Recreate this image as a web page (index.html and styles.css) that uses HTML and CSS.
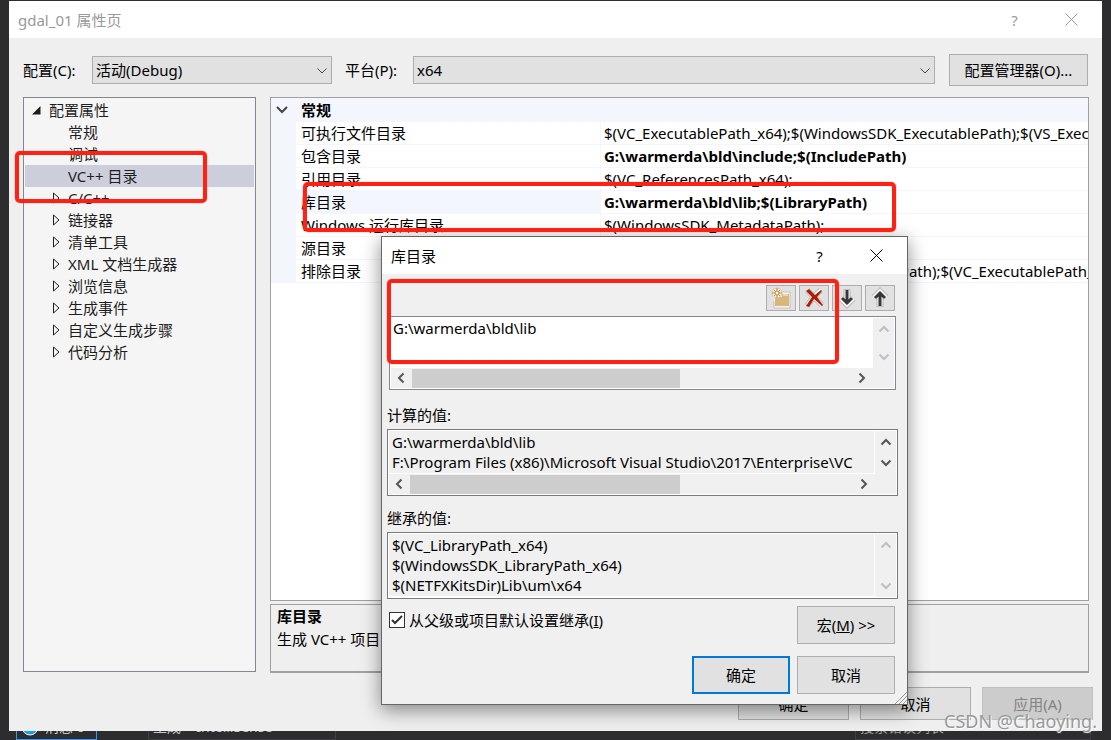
FILE: index.html
```html
<!DOCTYPE html>
<html lang="zh-CN">

  <head>
    <meta charset="UTF-8">
    <meta name="viewport" content="width=device-width, initial-scale=1.0">
    <title>gdal_01 属性页</title>
    <link rel="stylesheet" href="styles.css">
  </head>

  <body>
    <main class="window">
      <header class="title-bar inactive">
        <h1>gdal_01 属性页</h1>
        <button class="title-btn" aria-label="帮助">?</button>
        <button class="title-btn" aria-label="关闭">
          <svg width="13" height="13" viewBox="0 0 13 13"><path d="M0.5 0.5l12 12M12.5 0.5l-12 12"/></svg>
        </button>
      </header>

      <div class="config-bar">
        <label class="config-label" for="config">配置(C):</label>
        <div class="select-box config-select">
          <select id="config"><option>活动(Debug)</option></select>
          <svg width="10" height="6" viewBox="0 0 10 6"><path d="M0.5 0.5l4.5 4.5l4.5-4.5"/></svg>
        </div>
        <label class="platform-label" for="platform">平台(P):</label>
        <div class="select-box platform-select">
          <select id="platform"><option>x64</option></select>
          <svg width="10" height="6" viewBox="0 0 10 6"><path d="M0.5 0.5l4.5 4.5l4.5-4.5"/></svg>
        </div>
        <button class="btn manager-btn">配置管理器(O)...</button>
      </div>

      <div class="panels">
        <nav class="tree">
          <div class="tree-root">
            <svg width="9" height="9" viewBox="0 0 9 9"><path d="M8.5 0v8.5H0z"/></svg>配置属性
          </div>
          <ul>
            <li>常规</li>
            <li>调试</li>
            <li class="selected">VC++ 目录</li>
            <li class="closed"><svg width="8" height="12" viewBox="0 0 8 12"><path d="M1.5 1v10l5.5-5z"/></svg>C/C++</li>
            <li class="closed"><svg width="8" height="12" viewBox="0 0 8 12"><path d="M1.5 1v10l5.5-5z"/></svg>链接器</li>
            <li class="closed"><svg width="8" height="12" viewBox="0 0 8 12"><path d="M1.5 1v10l5.5-5z"/></svg>清单工具</li>
            <li class="closed"><svg width="8" height="12" viewBox="0 0 8 12"><path d="M1.5 1v10l5.5-5z"/></svg>XML 文档生成器</li>
            <li class="closed"><svg width="8" height="12" viewBox="0 0 8 12"><path d="M1.5 1v10l5.5-5z"/></svg>浏览信息</li>
            <li class="closed"><svg width="8" height="12" viewBox="0 0 8 12"><path d="M1.5 1v10l5.5-5z"/></svg>生成事件</li>
            <li class="closed"><svg width="8" height="12" viewBox="0 0 8 12"><path d="M1.5 1v10l5.5-5z"/></svg>自定义生成步骤</li>
            <li class="closed"><svg width="8" height="12" viewBox="0 0 8 12"><path d="M1.5 1v10l5.5-5z"/></svg>代码分析</li>
          </ul>
        </nav>

        <div class="details">
          <div class="properties">
            <table>
              <colgroup><col class="col-gutter"><col class="col-name"><col></colgroup>
              <tbody>
                <tr class="group">
                  <td class="gutter"><svg width="12" height="8" viewBox="0 0 12 8"><path d="M1 1l5 5l5-5"/></svg></td>
                  <th colspan="2">常规</th>
                </tr>
                <tr><td class="gutter"></td><td>可执行文件目录</td><td>$(VC_ExecutablePath_x64);$(WindowsSDK_ExecutablePath);$(VS_ExecutablePath)</td></tr>
                <tr><td class="gutter"></td><td>包含目录</td><td class="changed">G:\warmerda\bld\include;$(IncludePath)</td></tr>
                <tr><td class="gutter"></td><td>引用目录</td><td>$(VC_ReferencesPath_x64);</td></tr>
                <tr><td class="gutter"></td><td class="active">库目录</td><td class="changed">G:\warmerda\bld\lib;$(LibraryPath)</td></tr>
                <tr><td class="gutter"></td><td>Windows 运行库目录</td><td>$(WindowsSDK_MetadataPath);</td></tr>
                <tr><td class="gutter"></td><td>源目录</td><td></td></tr>
                <tr><td class="gutter"></td><td>排除目录</td><td>$(VC_IncludePath);$(WindowsSDK_IncludePath);$(VC_ExecutablePath_x64)</td></tr>
              </tbody>
            </table>
          </div>
          <div class="description">
            <h2>库目录</h2>
            <p>生成 VC++ 项目</p>
          </div>
        </div>
      </div>

      <div class="window-buttons">
        <button class="btn">确定</button>
        <button class="btn">取消</button>
        <button class="btn" disabled>应用(A)</button>
      </div>
    </main>

    <footer class="status-strip">
      <span class="status-item messages">
        <svg width="18" height="18" viewBox="0 0 18 18"><circle cx="9" cy="9" r="8"/><path d="M9 7v6"/></svg>消息 0
      </span>
      <span class="status-item build">生成 + IntelliSense</span>
      <span class="status-item search">搜索错误列表</span>
    </footer>

    <section class="dialog" role="dialog" aria-labelledby="dialog-title">
      <header class="title-bar">
        <h2 id="dialog-title">库目录</h2>
        <button class="title-btn" aria-label="帮助">?</button>
        <button class="title-btn" aria-label="关闭">
          <svg width="13" height="13" viewBox="0 0 13 13"><path d="M0.5 0.5l12 12M12.5 0.5l-12 12"/></svg>
        </button>
      </header>

      <div class="dialog-body">
        <div class="tool-buttons">
          <button class="btn" aria-label="新行">
            <svg width="22" height="22" viewBox="0 0 22 22">
              <path d="M3 8h6l2-3h9v16H4v-7" fill="#f8f6f2" stroke="#c6c3bd"/>
              <path d="M5 10h7V7h7v12H5z" fill="#dcb679"/>
              <path d="M13 8h5" stroke="#fff8e8"/>
              <circle cx="7" cy="6" r="5" fill="#f6f4ef" stroke="#cbc6bd"/>
              <path d="M7 1v10M2 6h10M4 3l6 6M10 3l-6 6" stroke="#c98520"/>
              <circle cx="7" cy="6" r="2" fill="#fff" stroke="#c98520"/>
            </svg>
          </button>
          <button class="btn" aria-label="删除">
            <svg width="22" height="22" viewBox="0 0 22 22">
              <path d="M4 3c4 4 9 9 15 15M18 3c-5 4-9 9-14 16" fill="none" stroke="#bbb" stroke-width="6"/>
              <path d="M4 3c4 4 9 9 15 15M18 3c-5 4-9 9-14 16" fill="none" stroke="#f6f6f6" stroke-width="4"/>
              <path d="M3 4l3-2l6 6l6-5l1 1l-5 6l6 8l-1 1l-8-7l-5 8l-3-1l6-9z" fill="#a91c05"/>
            </svg>
          </button>
          <button class="btn" aria-label="下移">
            <svg width="22" height="22" viewBox="0 0 22 22">
              <path d="M11 2v16M5 11l6 6l6-6" fill="none" stroke="#bbb" stroke-width="7"/>
              <path d="M11 3v15M5 11l6 6l6-6" fill="none" stroke="#f6f6f6" stroke-width="5"/>
              <path d="M11 3v14M6 11l5 5l5-5" fill="none" stroke="#38383c" stroke-width="3"/>
            </svg>
          </button>
          <button class="btn" aria-label="上移">
            <svg width="22" height="22" viewBox="0 0 22 22">
              <path d="M11 4v16M5 11l6-6l6 6" fill="none" stroke="#bbb" stroke-width="7"/>
              <path d="M11 4v15M5 11l6-6l6 6" fill="none" stroke="#f6f6f6" stroke-width="5"/>
              <path d="M11 5v14M6 11l5-5l5 5" fill="none" stroke="#38383c" stroke-width="3"/>
            </svg>
          </button>
        </div>

        <div class="list-box editable">
          <textarea aria-label="目录" wrap="off" rows="2">G:\warmerda\bld\lib</textarea>
          <div class="scroll-v off">
            <svg width="12" height="8" viewBox="0 0 12 8"><path d="M1.5 6.5l4.5-4.5l4.5 4.5"/></svg>
            <svg width="12" height="8" viewBox="0 0 12 8"><path d="M1.5 1.5l4.5 4.5l4.5-4.5"/></svg>
          </div>
          <div class="scroll-h">
            <svg width="8" height="12" viewBox="0 0 8 12"><path d="M6.5 1.5l-4.5 4.5l4.5 4.5"/></svg>
            <div class="scroll-track"><div class="scroll-thumb"></div></div>
            <svg width="8" height="12" viewBox="0 0 8 12"><path d="M1.5 1.5l4.5 4.5l-4.5 4.5"/></svg>
          </div>
        </div>

        <label class="list-label evaluated-label" for="evaluated">计算的值:</label>
        <div class="list-box">
          <textarea id="evaluated" wrap="off" rows="2" readonly>G:\warmerda\bld\lib
F:\Program Files (x86)\Microsoft Visual Studio\2017\Enterprise\VC</textarea>
          <div class="scroll-v">
            <svg width="12" height="8" viewBox="0 0 12 8"><path d="M1.5 6.5l4.5-4.5l4.5 4.5"/></svg>
            <svg width="12" height="8" viewBox="0 0 12 8"><path d="M1.5 1.5l4.5 4.5l4.5-4.5"/></svg>
          </div>
          <div class="scroll-h">
            <svg width="8" height="12" viewBox="0 0 8 12"><path d="M6.5 1.5l-4.5 4.5l4.5 4.5"/></svg>
            <div class="scroll-track"><div class="scroll-thumb"></div></div>
            <svg width="8" height="12" viewBox="0 0 8 12"><path d="M1.5 1.5l4.5 4.5l-4.5 4.5"/></svg>
          </div>
        </div>

        <label class="list-label" for="inherited">继承的值:</label>
        <div class="list-box">
          <textarea id="inherited" wrap="off" rows="3" readonly>$(VC_LibraryPath_x64)
$(WindowsSDK_LibraryPath_x64)
$(NETFXKitsDir)Lib\um\x64</textarea>
          <div class="scroll-v off">
            <svg width="12" height="8" viewBox="0 0 12 8"><path d="M1.5 6.5l4.5-4.5l4.5 4.5"/></svg>
            <svg width="12" height="8" viewBox="0 0 12 8"><path d="M1.5 1.5l4.5 4.5l4.5-4.5"/></svg>
          </div>
        </div>

        <div class="dialog-footer">
          <label class="inherit">
            <input type="checkbox" checked>
            <svg width="12" height="10" viewBox="0 0 12 10"><path d="M1 5l3 3l7-7"/></svg>
            <span>从父级或项目默认设置继承(<u>I</u>)</span>
          </label>
          <button class="btn">宏(<u>M</u>) &gt;&gt;</button>
          <button class="btn default">确定</button>
          <button class="btn">取消</button>
        </div>
      </div>
      <svg class="grip" width="12" height="12" viewBox="0 0 12 12"><path d="M0 12l12-12M4 12l8-8M8 12l4-4"/></svg>
    </section>

    <!-- highlight frames -->
    <div class="mark mark-tree"></div>
    <div class="mark mark-row"></div>
    <div class="mark mark-list"></div>

    <div class="watermark">CSDN @Chaoying.</div>
  </body>

</html>
```
FILE: styles.css
```css
* {
  box-sizing: border-box;
}

body {
  position: relative;
  margin: 0;
  min-height: 100vh;
  overflow-x: hidden;
  background-color: #2d2d30;
  color: #000;
  font-family: 'Noto Sans', 'Noto Sans CJK SC', sans-serif;
  font-size: 15px;
  line-height: 20px;
}

h1, h2, p, ul {
  margin: 0;
  padding: 0;
  font-size: 15px;
}

svg {
  display: block;
  flex: none;
  fill: none;
}

button, select, textarea {
  margin: 0;
  font: inherit;
  color: inherit;
}

.window {
  margin: 1px 9px 0;
  background-color: #efefef;
}

/* Title bars */
.title-bar {
  display: flex;
  align-items: center;
  height: 37px;
  padding-left: 9px;
  background-color: #fff;
}

.title-bar h1, .title-bar h2 {
  flex: 1;
  font-weight: normal;
}

.title-bar.inactive {
  color: #999;
}

.title-btn {
  display: flex;
  justify-content: center;
  align-items: center;
  width: 57px;
  height: 36px;
  padding: 0;
  border: none;
  background: none;
}

.title-bar.inactive .title-btn:last-child {
  margin-right: 2px;
}

.title-btn svg {
  stroke: currentColor;
}

/* Buttons and drop-downs */
.btn {
  padding: 0;
  border: 1px solid #adadad;
  background-color: #e1e1e1;
}

.btn:hover {
  border-color: #0078d7;
}

.btn:disabled {
  border-color: #bfbfbf;
  background-color: #ccc;
  color: #838383;
}

.btn.default {
  border: 2px solid #0078d7;
}

.config-bar {
  display: flex;
  align-items: center;
  padding: 16px 14px 11px;
}

.config-label {
  width: 69px;
}

.platform-label {
  width: 68px;
  margin-left: 13px;
}

.select-box {
  position: relative;
}

.config-select {
  width: 240px;
}

.platform-select {
  flex: 1;
}

.select-box select {
  display: block;
  width: 100%;
  height: 28px;
  padding: 0 20px 0 3px;
  border: 1px solid #adadad;
  border-radius: 0;
  background-color: #e1e1e1;
  appearance: none;
}

.select-box svg {
  position: absolute;
  top: 12px;
  right: 5px;
  stroke: #444;
  pointer-events: none;
}

.manager-btn {
  width: 139px;
  height: 32px;
  margin-left: 14px;
}

/* Main area */
.panels {
  display: flex;
  align-items: flex-start;
  gap: 14px;
  padding: 0 13px 0 14px;
}

.tree {
  width: 233px;
  min-height: 575px;
  padding: 1px;
  border: 1px solid #828790;
  background-color: #f5f5f5;
  color: #1e1e1e;
  line-height: 22px;
}

.tree-root {
  display: flex;
  align-items: center;
  gap: 8px;
  padding-left: 7px;
}

.tree-root svg {
  fill: #1e1e1e;
}

.tree li {
  display: flex;
  align-items: center;
  padding-left: 43px;
}

.tree li.selected {
  background-color: #cccedb;
}

.tree li.closed {
  gap: 8px;
  padding-left: 27px;
}

.tree li svg {
  stroke: #1e1e1e;
}

.details {
  display: flex;
  flex: 1;
  flex-direction: column;
  gap: 3px;
  min-width: 0;
}

.properties {
  min-height: 504px;
  overflow: hidden;
  border: 1px solid #a0a0a0;
  background-color: #fff;
}

.properties table {
  width: 100%;
  table-layout: fixed;
  border-collapse: separate;
  border-spacing: 0;
}

.col-gutter {
  width: 25px;
}

.col-name {
  width: 305px;
}

.properties td, .properties th {
  height: 23px;
  padding: 0 0 0 5px;
  overflow: hidden;
  border-right: 1px solid #f3f7fd;
  border-bottom: 1px solid #f3f7fd;
  text-align: left;
  white-space: nowrap;
}

.properties td:last-child {
  padding-left: 3px;
  border-right: none;
}

.properties .group th, .properties .active, .properties .gutter {
  background-color: #f3f7fd;
}

.properties .group th {
  height: 24px;
}

.properties .changed {
  font-weight: bold;
}

.gutter svg {
  stroke: #444;
  stroke-width: 2;
}

.description {
  height: 69px;
  padding-left: 6px;
  border: 1px solid #a0a0a0;
  border-bottom-width: 2px;
  line-height: 23px;
}

.window-buttons {
  display: flex;
  justify-content: flex-end;
  gap: 11px;
  padding: 14px 9px 11px;
}

.window-buttons .btn {
  width: 111px;
  height: 33px;
}

/* What shows of the status bar below the window */
.status-strip {
  display: flex;
  align-items: flex-end;
  height: 9px;
  padding: 0 20px 0 16px;
  overflow: hidden;
  color: #c8c8c8;
  font-size: 14px;
}

.status-item {
  display: flex;
  align-items: center;
  gap: 6px;
  height: 26px;
  padding-left: 4px;
  border: 1px solid #3f3f46;
}

.messages {
  width: 81px;
  border-color: #3399ff;
}

.messages svg {
  fill: #1ba1e2;
  stroke: #fff;
}

.build {
  width: 188px;
  margin-left: 51px;
}

.search {
  width: 236px;
  margin-left: auto;
  color: #999;
}

/* Directory editor */
.dialog {
  position: absolute;
  top: 236px;
  left: 381px;
  width: 527px;
  border: 1px solid #666;
  background-color: #f0f0f0;
  box-shadow: 0 5px 18px rgba(0, 0, 0, 0.45);
}

.dialog-body {
  padding: 11px 9px 10px 5px;
}

.dialog .title-btn:last-child {
  margin-right: 2px;
}

.tool-buttons {
  display: flex;
  justify-content: flex-end;
  gap: 3px;
  margin: 0 3px 5px;
}

.tool-buttons .btn {
  display: flex;
  justify-content: center;
  align-items: center;
  width: 30px;
  height: 26px;
}

.list-box {
  display: grid;
  grid-template-columns: 1fr 21px;
  padding: 1px;
  border: 1px solid #7a7a7a;
  box-shadow: inset 0 0 0 1px #fff;
}

.list-box.editable {
  margin: 0 2px;
  border-color: #828790;
}

.list-box textarea {
  display: block;
  width: 100%;
  padding: 1px 3px;
  overflow: hidden;
  border: none;
  border-right: 1px solid #fff;
  border-bottom: 1px solid #fff;
  outline: none;
  background-color: #f0f0f0;
  resize: none;
}

.list-box.editable textarea {
  height: 50px;
  padding: 0 2px;
  background-color: #fff;
}

.scroll-v {
  display: flex;
  flex-direction: column;
  align-items: center;
  justify-content: space-between;
  padding: 7px 0;
  background-color: #f0f0f0;
}

.scroll-v svg, .scroll-h svg {
  stroke: #555;
  stroke-width: 2;
}

.scroll-v.off svg {
  stroke: #bfbfbf;
}

.scroll-h {
  display: flex;
  grid-column: 1 / -1;
  align-items: center;
  height: 20px;
  padding: 0 28px 0 6px;
  background-color: #f0f0f0;
}

.scroll-track {
  flex: 1;
  padding: 0 7px;
}

.scroll-thumb {
  width: 61%;
  height: 19px;
  background-color: #cdcdcd;
}

.list-label {
  display: block;
  margin: 12px 0 4px;
}

.evaluated-label {
  margin-top: 15px;
}

.dialog-footer {
  display: grid;
  grid-template-columns: 1fr 98px 98px;
  gap: 12px 7px;
  margin: 7px 3px 0 2px;
}

.dialog-footer .btn {
  height: 38px;
}

.default {
  grid-column: 2;
}

.inherit {
  position: relative;
  display: flex;
  grid-column: 1 / 3;
  align-items: center;
  gap: 4px;
  height: 28px;
}

.inherit input {
  width: 16px;
  height: 16px;
  margin: 0;
  border: 1px solid #333;
  background-color: #fff;
  appearance: none;
}

.inherit svg {
  position: absolute;
  top: 9px;
  left: 2px;
  stroke: #333;
  stroke-width: 2;
  pointer-events: none;
}

.inherit input:not(:checked) + svg {
  display: none;
}

.grip {
  position: absolute;
  right: 0;
  bottom: 0;
  stroke: #999;
}

/* Red frames */
.mark {
  position: absolute;
  border: 4px solid #ff2114;
  border-radius: 5px;
  box-shadow: 0 0 1px #ff2114;
  pointer-events: none;
}

.mark-tree {
  top: 151px;
  left: 15px;
  width: 192px;
  height: 52px;
}

.mark-row {
  top: 182px;
  left: 303px;
  width: 593px;
  height: 50px;
}

.mark-list {
  top: 279px;
  left: 387px;
  width: 452px;
  height: 85px;
}

.watermark {
  position: absolute;
  right: 14px;
  bottom: 7px;
  color: #999;
  font-size: 18px;
  line-height: 24px;
  text-shadow: 1px 1px 1px #fff;
}
```
